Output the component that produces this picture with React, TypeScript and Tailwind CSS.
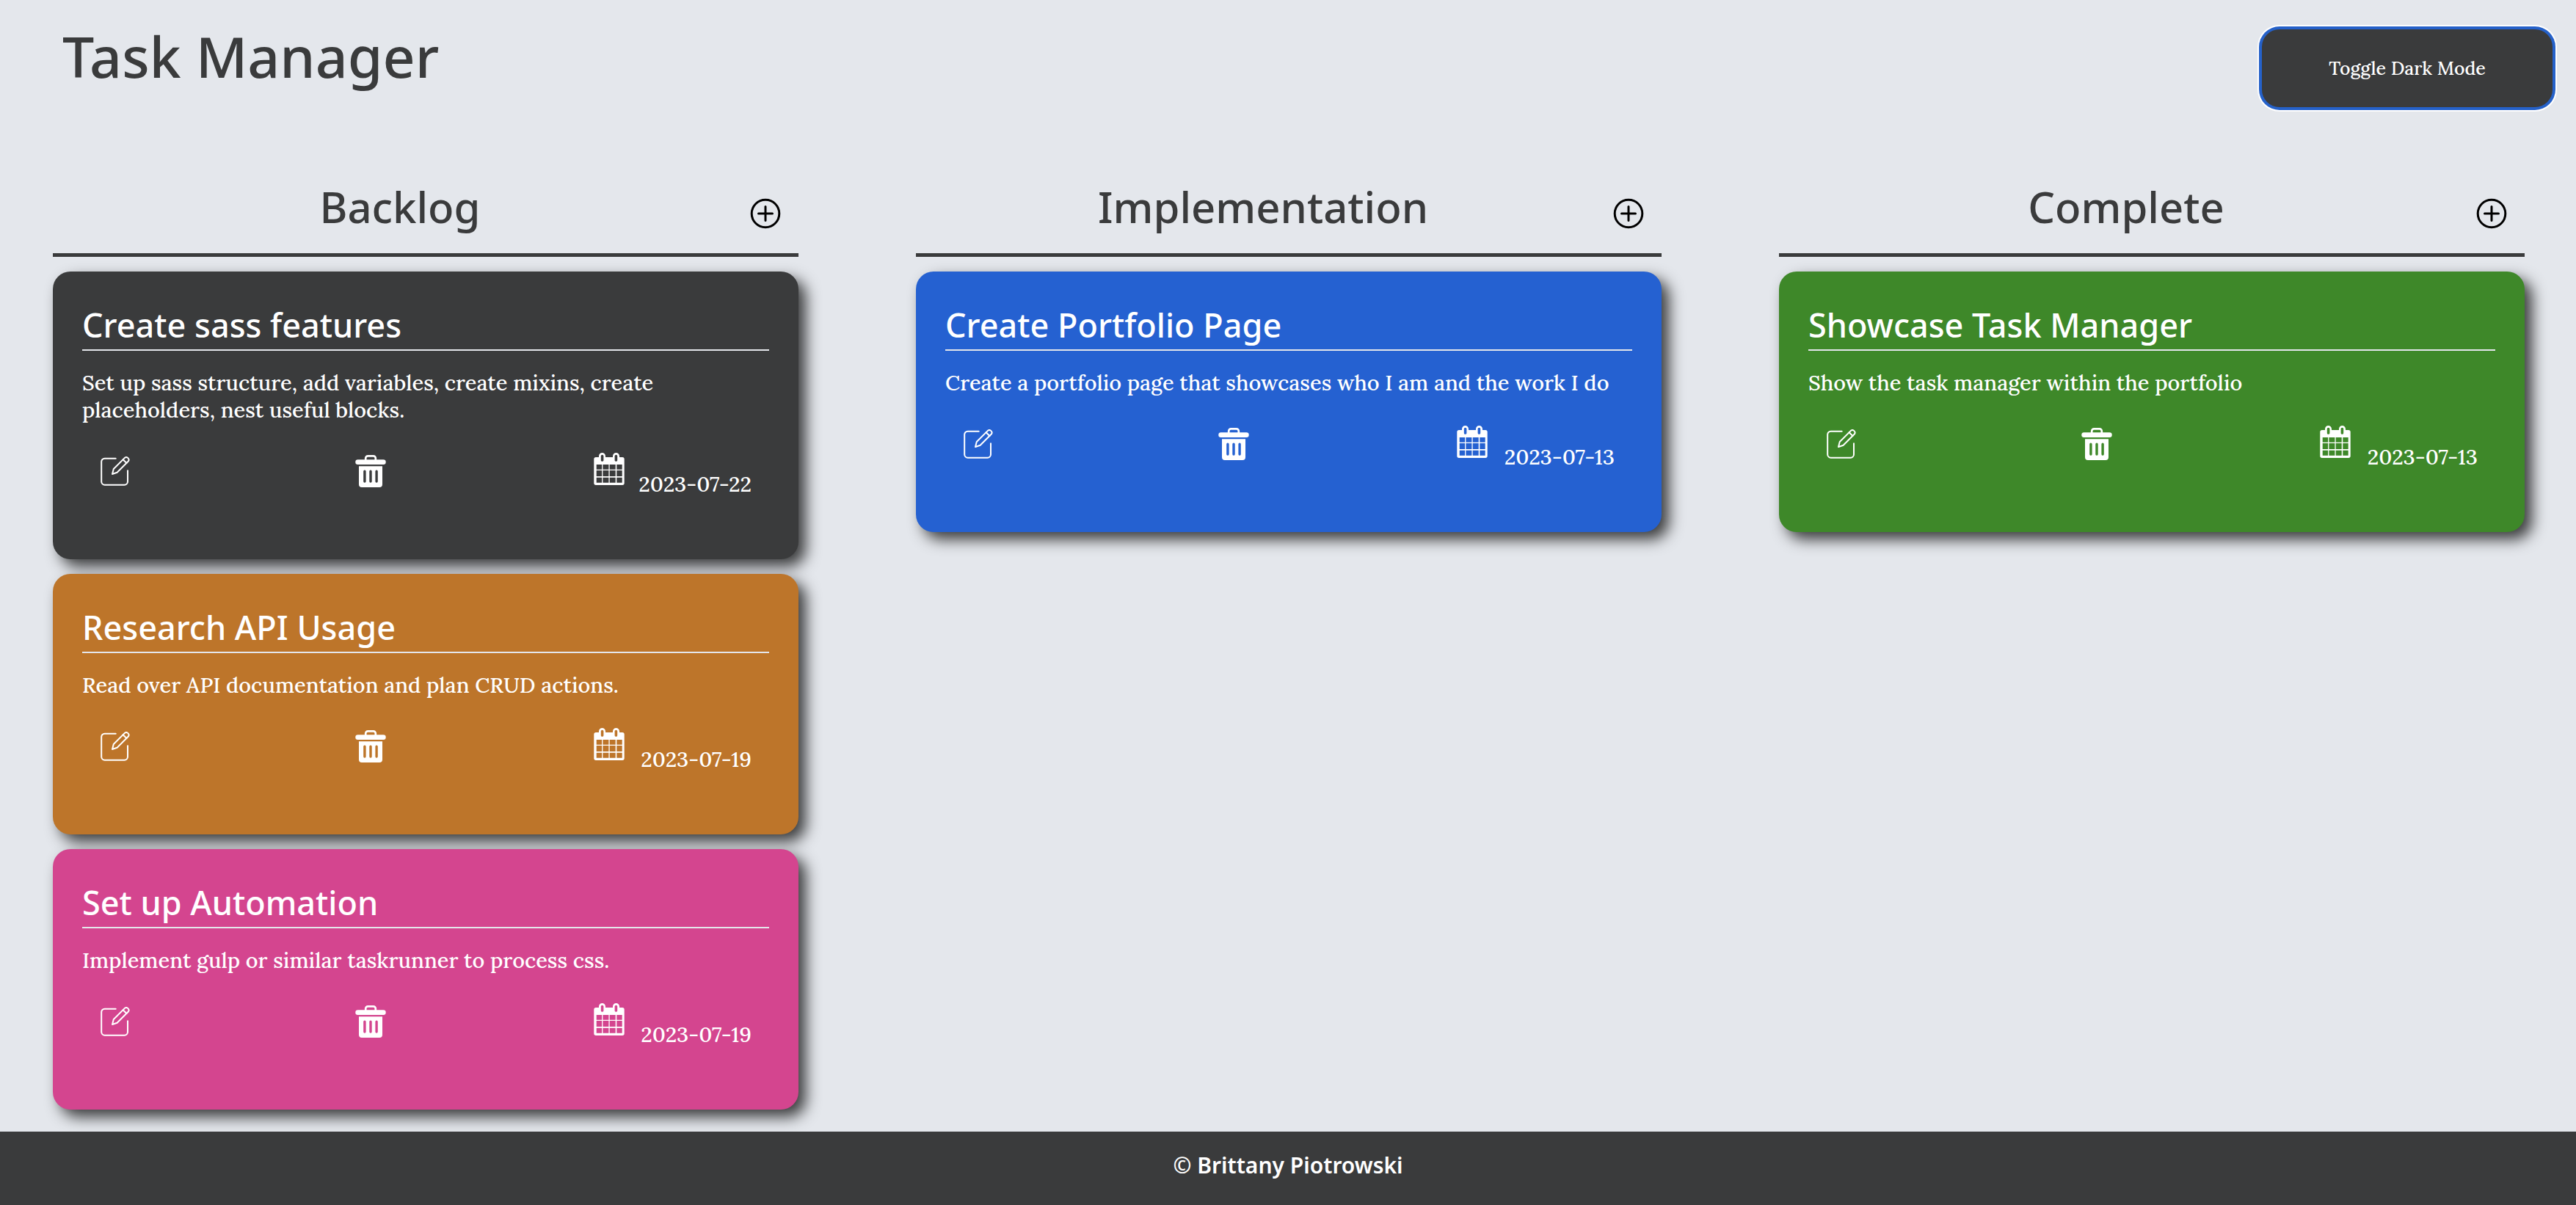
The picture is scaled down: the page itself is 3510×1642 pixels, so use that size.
import React from "react";

type Task = { title: string; text: string; date: string; color: string };
type Column = { name: string; tasks: Task[] };

const columns: Column[] = [
  {
    name: "Backlog",
    tasks: [
      {
        title: "Create sass features",
        text: "Set up sass structure, add variables, create mixins, create placeholders, nest useful blocks.",
        date: "2023-07-22",
        color: "bg-[#3a3b3c]",
      },
      {
        title: "Research API Usage",
        text: "Read over API documentation and plan CRUD actions.",
        date: "2023-07-19",
        color: "bg-[#bd752a]",
      },
      {
        title: "Set up Automation",
        text: "Implement gulp or similar taskrunner to process css.",
        date: "2023-07-19",
        color: "bg-[#d4458f]",
      },
    ],
  },
  {
    name: "Implementation",
    tasks: [
      {
        title: "Create Portfolio Page",
        text: "Create a portfolio page that showcases who I am and the work I do",
        date: "2023-07-13",
        color: "bg-[#2561d1]",
      },
    ],
  },
  {
    name: "Complete",
    tasks: [
      {
        title: "Showcase Task Manager",
        text: "Show the task manager within the portfolio",
        date: "2023-07-13",
        color: "bg-[#3e8829]",
      },
    ],
  },
];

function PlusIcon() {
  return (
    <svg viewBox="0 0 42 42" className="size-[42px]" fill="none" stroke="currentColor" strokeWidth="3" aria-hidden="true">
      <circle cx="21" cy="21" r="18.8" />
      <path d="M21 11.5v19M11.5 21h19" strokeLinecap="round" />
    </svg>
  );
}

function EditIcon() {
  return (
    <svg viewBox="0 0 40 40" className="size-10 shrink-0" fill="none" stroke="currentColor" strokeWidth="2" strokeLinecap="round" strokeLinejoin="round" aria-hidden="true">
      <path d="M20.7 2.7H5.6a4.4 4.4 0 0 0-4.4 4.4v27.2a4.4 4.4 0 0 0 4.4 4.4h27a4.4 4.4 0 0 0 4.4-4.4V19.2" />
      <path d="M32.7 2.1a3.4 3.4 0 0 1 4.9 4.7L22.6 21.8 16 24l1.8-7Z" />
      <path d="m30.6 4.2 4.9 4.8" />
    </svg>
  );
}

function TrashIcon() {
  return (
    <svg viewBox="0 0 42 44" className="h-11 w-[42px]" fill="currentColor" aria-hidden="true">
      <path d="M14.2 8V4.4a3 3 0 0 1 3-3h7.6a3 3 0 0 1 3 3V8" fill="none" stroke="currentColor" strokeWidth="2.7" />
      <rect x="0.3" y="6.3" width="41.4" height="6.7" rx="3.3" />
      <path
        fillRule="evenodd"
        d="M5 15.3h32V40a4 4 0 0 1-4 4H9a4 4 0 0 1-4-4ZM11.2 22.3v13.8a1.7 1.7 0 0 0 3.4 0V22.3a1.7 1.7 0 0 0-3.4 0ZM19.3 22.3v13.8a1.7 1.7 0 0 0 3.4 0V22.3a1.7 1.7 0 0 0-3.4 0ZM27.4 22.3v13.8a1.7 1.7 0 0 0 3.4 0V22.3a1.7 1.7 0 0 0-3.4 0Z"
      />
    </svg>
  );
}

function CalendarIcon() {
  return (
    <svg viewBox="0 0 42 44" className="h-11 w-[42px] shrink-0" fill="currentColor" fillRule="evenodd" aria-hidden="true">
      <path
        d="M3 6h4V4.5a4.5 4.5 0 0 1 9 0V6h10V4.5a4.5 4.5 0 0 1 9 0V6h4a2.7 2.7 0 0 1 2.7 2.7v32.6A2.7 2.7 0 0 1 39 44H3a2.7 2.7 0 0 1-2.7-2.7V8.7A2.7 2.7 0 0 1 3 6Z
        M9.8 4.2v6.1a1.8 1.5 0 0 0 3.6 0V4.2a1.8 1.5 0 0 0-3.6 0Z
        M28.6 4.2v6.1a1.8 1.5 0 0 0 3.6 0V4.2a1.8 1.5 0 0 0-3.6 0Z
        M3.7 16h7.4v6.7H3.7ZM12.4 16h8v6.7h-8ZM21.7 16h8v6.7h-8ZM31.3 16h7.4v6.7h-7.4Z
        M3.7 24h7.4v8H3.7ZM12.4 24h8v8h-8ZM21.7 24h8v8h-8ZM31.3 24h7.4v8h-7.4Z
        M3.7 33.7h7.4v7H3.7ZM12.4 33.7h8v7h-8ZM21.7 33.7h8v7h-8ZM31.3 33.7h7.4v7h-7.4Z"
      />
    </svg>
  );
}

function TaskCard({ task }: { task: Task }) {
  return (
    <article className={`rounded-3xl px-10 pt-[45px] pb-[84px] text-white shadow-[10px_10px_20px_#3a3b3c] ${task.color}`}>
      <h3 className="border-b-2 border-[#e4e6eb] pb-[5px] font-['M_PLUS_Rounded_1c','Noto_Sans',sans-serif] text-[45px] leading-[56px] font-medium">
        {task.title}
      </h3>
      <p className="mt-[25px]">{task.text}</p>
      <div className="mt-10 flex items-start justify-between pr-6 pl-[25px]">
        <button type="button" aria-label={`Edit ${task.title}`} className="flex w-16 pt-[5px]">
          <EditIcon />
        </button>
        <button type="button" aria-label={`Delete ${task.title}`} className="pt-[3px]">
          <TrashIcon />
        </button>
        <div className="flex gap-[18px]">
          <CalendarIcon />
          <time dateTime={task.date} className="mt-6 w-[155px] text-right whitespace-nowrap">
            {task.date}
          </time>
        </div>
      </div>
    </article>
  );
}

export default function App() {
  return (
    <div className="flex min-h-screen flex-col bg-[#e4e7ec] font-[Lora,'Noto_Serif',serif] text-[29px] leading-[37px] font-medium text-[#3a3b3c]">
      <header className="flex items-start justify-between pt-8 pr-8 pl-[85px]">
        <h1 className="font-['M_PLUS_Rounded_1c','Noto_Sans',sans-serif] text-[77px] leading-[90px] font-medium">Task Manager</h1>
        <button
          type="button"
          className="mt-2 h-[106px] w-[396px] rounded-3xl bg-[#3a3b3c] text-[25px] font-medium text-white shadow-[0_0_0_4px_#2561c9,0_0_0_6px_#ffffff]"
        >
          Toggle Dark Mode
        </button>
      </header>

      <main className="grid grid-cols-3 items-start gap-40 pt-[98px] pr-[70px] pb-[30px] pl-[72px]">
        {columns.map((column) => (
          <section key={column.name} className="flex flex-col gap-5">
            <div className="flex items-end border-b-[5px] border-[#3a3b3c] pr-5 pb-[25px]">
              <h2 className="flex-1 text-center font-['M_PLUS_Rounded_1c','Noto_Sans',sans-serif] text-[58px] leading-[76px] font-medium">
                {column.name}
              </h2>
              <button type="button" aria-label={`Add task to ${column.name}`} className="flex h-[58px] w-[50px] items-center justify-center text-black">
                <PlusIcon />
              </button>
            </div>
            {column.tasks.map((task) => (
              <TaskCard key={task.title} task={task} />
            ))}
          </section>
        ))}
      </main>

      <footer className="z-10 mt-auto bg-[#3a3b3c] pt-[26px] pb-[34px] text-center font-['M_PLUS_Rounded_1c','Noto_Sans',sans-serif] text-[30px] leading-10 font-semibold text-white">
        © Brittany Piotrowski
      </footer>
    </div>
  );
}
